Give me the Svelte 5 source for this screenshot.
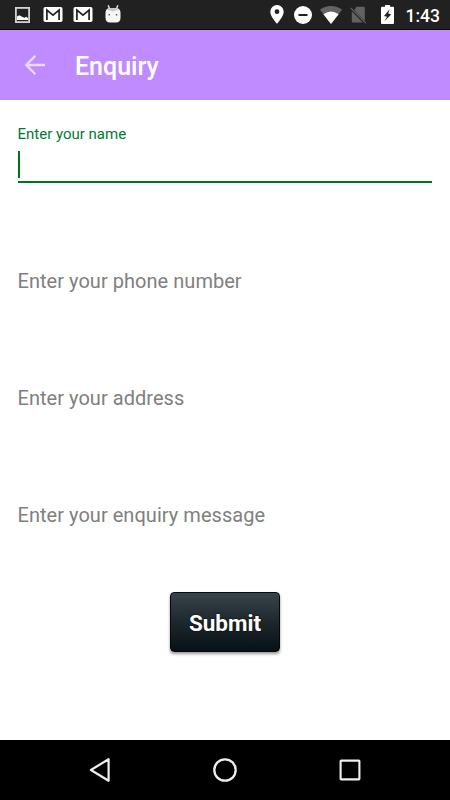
<script lang="ts">
  let name = $state("");

  const fields = [
    { id: "phone", hint: "Enter your phone number" },
    { id: "address", hint: "Enter your address" },
    { id: "message", hint: "Enter your enquiry message" },
  ];
</script>

{#snippet gmail()}
  <svg width="20" height="15" viewBox="0 0 20 15">
    <rect x=".5" width="19" height="15" rx="1.8" fill="#fff" />
    <path d="M3.9 13V3l6.1 5.2L16.1 3v10" fill="none" stroke="#212121" stroke-width="1.7" />
  </svg>
{/snippet}

<div class="screen">
  <div class="status">
    <div class="notifications">
      <svg width="15" height="16" viewBox="0 0 15 16">
        <rect x=".9" y=".9" width="13.2" height="14.2" fill="none" stroke="#d2d2d2" stroke-width="1.8" />
        <path d="M2 13V9.6l2.3-1.4 2.2 1.4 3 1.2 1.6-1L13 11v2z" fill="#fff" />
      </svg>
      {@render gmail()}
      {@render gmail()}
      <svg class="droid" width="16" height="18" viewBox="0 0 16 18">
        <path d="M3.2.3 4.6 4M12.8.3 11.4 4" stroke="#ddd" stroke-width="1.5" />
        <path d="M.5 8Q.5 3.2 4.5 3.2h7q4 0 4 4.8v4.5q0 5-4.5 5H5q-4.5 0-4.5-5z" fill="#f7f7f7" />
        <path d="M2 5Q3.2 3.2 5 3.2h6q1.8 0 3 1.8l-3.2.6-2.8.9-2.8-.9z" fill="#c8c8c8" />
        <rect x="3.5" y="9" width="1.5" height="1.5" fill="#666" />
        <rect x="10.8" y="9" width="1.5" height="1.5" fill="#666" />
      </svg>
    </div>
    <div class="system">
      <svg class="pin" width="14" height="19" viewBox="0 0 14 19">
        <path fill="#fff" fill-rule="evenodd" d="M7 0a6.7 6.7 0 0 0-6.7 6.7C.3 11.6 7 18.7 7 18.7s6.7-7.1 6.7-12A6.7 6.7 0 0 0 7 0zm0 4.3a2.4 2.4 0 1 1 0 4.8 2.4 2.4 0 0 1 0-4.8z" />
      </svg>
      <svg class="dnd" width="18" height="18" viewBox="0 0 18 18">
        <circle cx="9" cy="9" r="9" fill="#fff" />
        <path d="M4.5 9h9" stroke="#212121" stroke-width="2" />
      </svg>
      <svg class="wifi" width="22" height="18" viewBox="0 0 22 18">
        <path d="M11 18 0 3.8C6-1.2 16-1.2 22 3.8z" fill="#646464" />
        <path d="M11 18 3.4 8.2Q11 2.6 18.6 8.2z" fill="#fff" />
      </svg>
      <svg class="sim" width="17" height="18" viewBox="0 0 17 18">
        <path d="M6.5.8h7.3q1 0 1 1V15L4.3 4.2z M1.8 5.2 12.8 16.4H2.8q-1 0-1-1z" fill="#626262" />
        <path d="M.7 1.9 15.8 17.2" stroke="#626262" stroke-width="1.2" />
      </svg>
      <svg class="battery" width="13" height="19" viewBox="0 0 13 19">
        <path d="M4 0h5v1.8h3q1 0 1 1V18q0 1-1 1H1q-1 0-1-1V2.8q0-1 1-1h3z" fill="#fff" />
        <path d="M8.6 4.2 3 10.9l3 .9-2.6 4.4 6.8-6.7-3-.9z" fill="#212121" />
      </svg>
      <span class="clock">1:43</span>
    </div>
  </div>

  <header>
    <button class="back" aria-label="Back">
      <svg width="20" height="20" viewBox="0 0 20 20">
        <path d="M20 10H1.8M10.3.9 1.2 10l9.1 9.1" fill="none" stroke="#ead9ff" stroke-width="2.3" />
      </svg>
    </button>
    <h1>Enquiry</h1>
  </header>

  <main>
    <div class="field active">
      <label for="name">Enter your name</label>
      <div class="entry">
        <span class="cursor"></span>
        <input id="name" bind:value={name} />
      </div>
    </div>
    {#each fields as field (field.id)}
      <div class="field">
        <input id={field.id} placeholder={field.hint} aria-label={field.hint} />
      </div>
    {/each}
    <button class="submit">Submit</button>
  </main>

  <nav>
    <svg width="24" height="26" viewBox="0 0 24 26">
      <path d="M20.6 2.2v21.6L2.9 13z" fill="none" stroke="#eee" stroke-width="2.2" stroke-linejoin="round" />
    </svg>
    <svg width="24" height="24" viewBox="0 0 24 24">
      <circle cx="12" cy="12" r="10.7" fill="none" stroke="#eee" stroke-width="2.3" />
    </svg>
    <svg width="24" height="24" viewBox="0 0 24 24">
      <rect x="2.6" y="2.6" width="18.8" height="18.8" rx=".6" fill="none" stroke="#eee" stroke-width="2.1" />
    </svg>
  </nav>
</div>

<style>
  :global(body) { margin: 0; background: #fff; }

  .screen {
    width: 450px;
    height: 800px;
    display: flex;
    flex-direction: column;
    overflow: hidden;
    background: #fff;
    font-family: Roboto, sans-serif;
  }

  svg { display: block; flex: none; }
  button { font: inherit; cursor: pointer; }

  .status {
    height: 30px;
    box-sizing: border-box;
    display: flex;
    justify-content: space-between;
    padding: 0 10px 0 15px;
    background: #212121;
    border-bottom: 1px solid #0b0b0b;
    color: #fff;
  }
  .notifications, .system { display: flex; align-items: center; }
  .notifications { gap: 10px; }
  .notifications svg:first-child { margin-right: 3px; }
  .droid { margin: -2px 0 0 2px; }
  .pin { margin-right: 10px; }
  .dnd { margin-right: 8px; }
  .wifi { margin-right: 8px; }
  .sim { margin-right: 14px; }
  .battery { margin-right: 12px; }
  .clock { font-size: 17.5px; font-weight: 500; line-height: 30px; margin-top: 2px; }

  header {
    height: 70px;
    display: flex;
    align-items: center;
    background: #bf8bff;
  }
  .back { margin-left: 25px; padding: 0; border: 0; background: none; }
  h1 { margin: 3px 0 0 30px; color: #fff; font-size: 25px; font-weight: 500; line-height: 30px; }

  main {
    flex: 1;
    display: flex;
    flex-direction: column;
  }
  .field {
    height: 117px;
    display: flex;
    align-items: center;
    padding: 0 17.5px;
  }
  .field.active {
    height: 98px;
    flex-direction: column;
    align-items: stretch;
    padding: 24px 18px 0 17.5px;
  }
  label { color: #007a33; font-size: 15px; line-height: 20px; }
  .entry {
    height: 39px;
    box-sizing: border-box;
    display: flex;
    align-items: center;
    border-bottom: 2px solid #00761a;
  }
  .cursor { width: 2px; height: 27px; margin-top: 4px; background: #00761a; }
  input {
    flex: 1;
    min-width: 0;
    padding: 0;
    border: 0;
    outline: 0;
    background: none;
    color: #222;
    font: 20px/28px Roboto, sans-serif;
    letter-spacing: .04px;
  }
  input::placeholder { color: #808080; opacity: 1; }

  .submit {
    align-self: center;
    width: 110px;
    height: 60px;
    margin-top: 19px;
    padding: 2px 0 0;
    border: 1px solid #05090b;
    border-radius: 4px;
    background: linear-gradient(#37444a, #1d282d 50%, #071015);
    box-shadow: 0 2px 3px #0006;
    color: #fff;
    font-size: 22.5px;
    font-weight: 700;
    text-shadow: 0 0 2px #000;
  }

  nav {
    height: 60px;
    display: flex;
    align-items: center;
    justify-content: space-between;
    padding: 0 88px;
    background: #000;
  }
</style>
